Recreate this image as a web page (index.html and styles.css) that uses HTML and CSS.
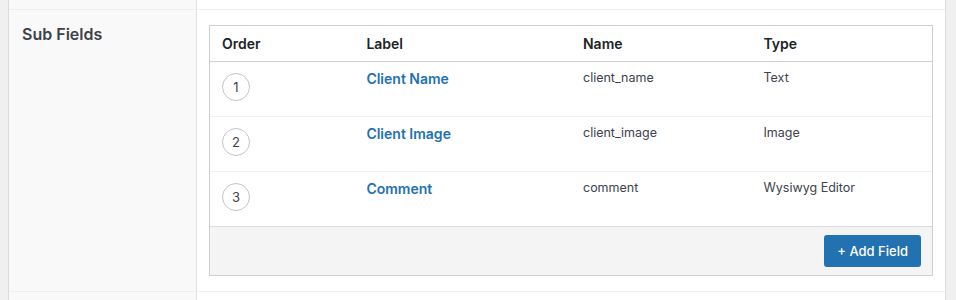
FILE: index.html
```html
<!DOCTYPE html>
<html lang="en">

<head>
   <meta charset="UTF-8">
   <title>Sub Fields</title>
   <link rel="stylesheet" href="styles.css">
</head>

<body>
   <div class="frame">
      <!-- previous setting row (cut off) -->
      <div class="setting setting-top">
         <div class="setting-label"></div>
         <div class="setting-input"></div>
      </div>

      <!-- sub fields row -->
      <div class="setting">
         <div class="setting-label">
            <label>Sub Fields</label>
         </div>
         <div class="setting-input">
            <div class="field-list">
               <div class="list-head">
                  <div class="cell">Order</div>
                  <div class="cell">Label</div>
                  <div class="cell">Name</div>
                  <div class="cell">Type</div>
               </div>

               <div class="list-body">
                  <div class="list-row">
                     <div class="cell"><span class="circle">1</span></div>
                     <div class="cell"><a class="field-label" href="#">Client Name</a></div>
                     <div class="cell small">client_name</div>
                     <div class="cell small">Text</div>
                  </div>
                  <div class="list-row">
                     <div class="cell"><span class="circle">2</span></div>
                     <div class="cell"><a class="field-label" href="#">Client Image</a></div>
                     <div class="cell small">client_image</div>
                     <div class="cell small">Image</div>
                  </div>
                  <div class="list-row">
                     <div class="cell"><span class="circle">3</span></div>
                     <div class="cell"><a class="field-label" href="#">Comment</a></div>
                     <div class="cell small">comment</div>
                     <div class="cell small">Wysiwyg Editor</div>
                  </div>
               </div>

               <div class="list-foot">
                  <button type="button" class="btn-add">+ Add Field</button>
               </div>
            </div>
         </div>
      </div>

      <!-- next setting row (cut off) -->
      <div class="setting setting-bottom">
         <div class="setting-label"></div>
         <div class="setting-input"></div>
      </div>
   </div>
</body>

</html>
```

FILE: styles.css
```css
* {
   box-sizing: border-box;
}

/* Page */
body {
   margin: 0;
   background: #f0f0f1;
   font-family: Inter, "Liberation Sans", sans-serif;
   color: #3c434a;
   height: 300px;
   overflow: hidden;
}

/* Outer frame */
.frame {
   margin-left: 8px;
   width: 938px;
   border-left: 1px solid #dcdcde;
   border-right: 1px solid #dcdcde;
   background: #fff;
}

/* Setting rows */
.setting {
   display: flex;
   border-bottom: 1px solid #eeeeee;
}

.setting-top {
   height: 10px;
}

.setting-bottom {
   height: 20px;
   border-bottom: none;
}

.setting-label {
   width: 188px;
   flex-shrink: 0;
   background: #f9f9f9;
   border-right: 1px solid #e1e1e1;
   padding: 14px 0 0 13px;
}

.setting-label label {
   font-size: 16px;
   font-weight: 600;
   line-height: 20px;
   color: #3c434a;
}

.setting-input {
   flex: 1;
   padding: 15px 12px;
}

.setting-top .setting-input,
.setting-bottom .setting-input,
.setting-top .setting-label,
.setting-bottom .setting-label {
   padding: 0;
}

/* Field list */
.field-list {
   border: 1px solid #ccd0d4;
}

.list-head,
.list-row {
   display: grid;
   grid-template-columns: 20% 30% 25% 25%;
}

.list-head {
   border-bottom: 1px solid #ccd0d4;
   font-size: 14px;
   font-weight: 600;
   color: #1d2327;
}

.list-head .cell {
   padding: 8px 12px;
   line-height: 19px;
}

.list-row {
   height: 55px;
   border-top: 1px solid #f0f0f1;
}

.list-row:first-child {
   height: 54px;
   border-top: none;
}

.list-row .cell {
   padding: 6px 12px 0;
   line-height: 20px;
}

.list-row .small {
   font-size: 12.5px;
   padding-top: 6px;
}

.circle {
   display: flex;
   align-items: center;
   justify-content: center;
   width: 28px;
   height: 28px;
   margin-top: 5px;
   border: 1px solid #c3c4c7;
   border-radius: 50%;
   font-size: 13px;
   color: #3c434a;
}

.field-label {
   font-size: 14px;
   font-weight: 600;
   color: #2271b1;
   text-decoration: none;
}

/* Footer */
.list-foot {
   display: flex;
   justify-content: flex-end;
   background: #f4f4f4;
   border-top: 1px solid #dcdcde;
   padding: 8px 11px 8px;
}

.btn-add {
   height: 32px;
   padding: 0 13px;
   background: #2271b1;
   color: #fff;
   border: none;
   border-radius: 3px;
   font-family: Inter, "Liberation Sans", sans-serif;
   font-size: 13px;
   font-weight: 500;
   cursor: pointer;
}
```
